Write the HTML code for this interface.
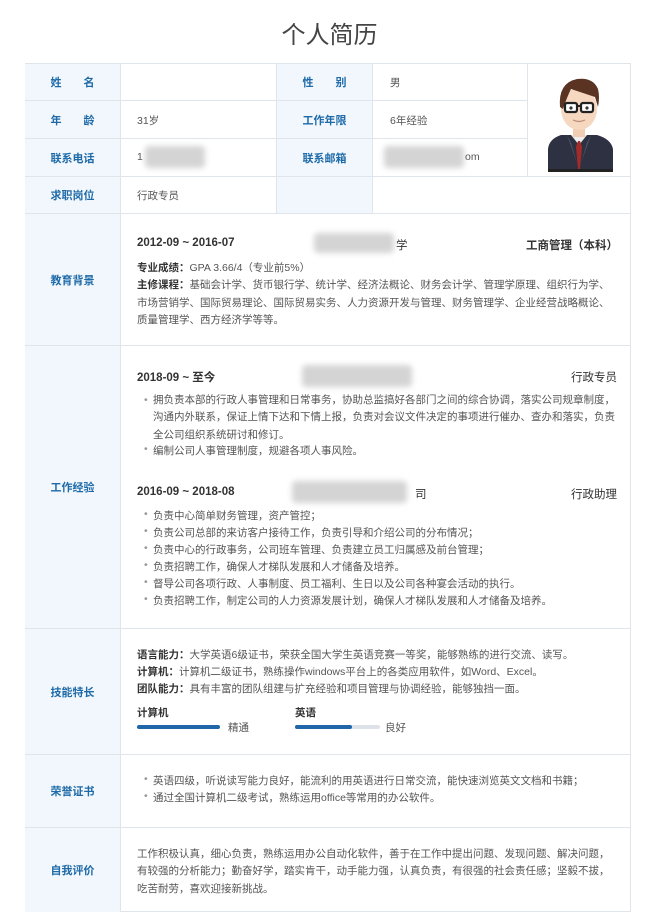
<!DOCTYPE html>
<html><head><meta charset="utf-8"><style>
*{margin:0;padding:0;box-sizing:border-box}
body{width:659px;height:913px;background:#fff;font-family:"Liberation Sans","Noto Sans CJK SC",sans-serif;color:#444;position:relative;overflow:hidden}
.a{position:absolute;white-space:nowrap}
.t{font-size:10.5px;color:#555}
.lab{position:absolute;left:25px;width:95px;background:#f1f7fc;color:#1e6aa8;font-size:11px;font-weight:bold;display:flex;align-items:center;justify-content:center}
.lab2{position:absolute;background:#f1f7fc;color:#1e6aa8;font-size:11px;font-weight:bold;display:flex;align-items:center;justify-content:center}
.h{position:absolute;left:25px;width:606px;height:1px;background:#dfe5ea}
.v{position:absolute;width:1px;background:#dfe5ea}
.b{font-weight:bold;color:#333;font-size:11.5px}
.blur{position:absolute;background:#d4d4d4;filter:blur(3px);border-radius:4px}
.li{font-size:10.5px;color:#555}
.li:before{content:"•";color:#999;position:absolute;left:-9px}
</style></head><body>
<div class="a" style="left:0;width:659px;text-align:center;top:15px;font-size:24px;color:#444">个人简历</div>

<div style="position:absolute;left:25px;top:63px;width:606px;height:849px;border:1px solid #dfe5ea"></div>
<div class="lab" style="top:64px;height:36px">姓　　名</div>
<div class="lab" style="top:101px;height:37px">年　　龄</div>
<div class="lab" style="top:139px;height:37px">联系电话</div>
<div class="lab" style="top:177px;height:36px">求职岗位</div>
<div class="lab2" style="left:277px;width:95px;top:64px;height:36px">性　　别</div>
<div class="lab2" style="left:277px;width:95px;top:101px;height:37px">工作年限</div>
<div class="lab2" style="left:277px;width:95px;top:139px;height:37px">联系邮箱</div>
<div class="lab2" style="left:277px;width:95px;top:177px;height:36px"></div>
<div class="lab" style="top:214px;height:131px">教育背景</div>
<div class="lab" style="top:346px;height:282px">工作经验</div>
<div class="lab" style="top:629px;height:125px">技能特长</div>
<div class="lab" style="top:755px;height:72px">荣誉证书</div>
<div class="lab" style="top:828px;height:84px">自我评价</div>

<div class="h" style="top:100px;width:502px"></div>
<div class="h" style="top:138px;width:502px"></div>
<div class="h" style="top:176px"></div>
<div class="h" style="top:213px"></div>
<div class="h" style="top:345px"></div>
<div class="h" style="top:628px"></div>
<div class="h" style="top:754px"></div>
<div class="h" style="top:827px"></div>
<div class="v" style="left:120px;top:63px;height:849px"></div>
<div class="v" style="left:276px;top:63px;height:150px"></div>
<div class="v" style="left:372px;top:63px;height:150px"></div>
<div class="v" style="left:527px;top:63px;height:113px"></div>

<div class="a t" style="left:390px;top:75px">男</div>
<div class="a t" style="left:137px;top:113px">31岁</div>
<div class="a t" style="left:390px;top:113px">6年经验</div>
<div class="a t" style="left:137px;top:151px">1</div>
<div class="blur" style="left:145px;top:146px;width:60px;height:22px"></div>
<div class="blur" style="left:384px;top:146px;width:80px;height:22px"></div>
<div class="a t" style="left:465px;top:151px">om</div>
<div class="a t" style="left:137px;top:188px">行政专员</div>

<svg style="position:absolute;left:527px;top:63px" width="104" height="113" viewBox="0 0 104 113">
<path d="M21 108 L21 86 Q22 76 34 72 L70 72 Q84 76 86 86 L86 108Z" fill="#2d3142"/>
<path d="M44 72 L52 82 L60 72Z" fill="#eee"/>
<path d="M40 72 L50 100 L44 80Z M64 72 L54 100 L60 80Z" fill="#555a6a"/>
<path d="M51 78 L53 78 L55 84 L53 106 L51 106 L49 84Z" fill="#a52a2a"/>
<rect x="46" y="60" width="12" height="14" fill="#f1cdb4"/>
<ellipse cx="52" cy="46" rx="18" ry="21" fill="#f6d7c0"/>
<path d="M33 44 Q31 20 50 16 Q66 14 71 26 Q73 34 71 44 L68 34 Q56 30 44 26 Q40 34 36 46Z" fill="#5a3322"/>
<rect x="38" y="40" width="12" height="9" rx="2" fill="#fff" stroke="#222" stroke-width="2.2"/>
<rect x="54" y="40" width="12" height="9" rx="2" fill="#fff" stroke="#222" stroke-width="2.2"/>
<line x1="50" y1="43" x2="54" y2="43" stroke="#222" stroke-width="2"/>
<circle cx="44" cy="45" r="1.6" fill="#333"/><circle cx="60" cy="45" r="1.6" fill="#333"/>
<path d="M46 57 Q52 60 58 57" stroke="#b87" stroke-width="1.2" fill="none"/>
<rect x="21" y="106" width="65" height="3" fill="#222"/>
</svg>

<div class="a b" style="left:137px;top:237px">2012-09 ~ 2016-07</div>
<div class="blur" style="left:314px;top:233px;width:80px;height:20px"></div>
<div class="a b" style="left:396px;top:237px;font-weight:normal">学</div>
<div class="a b" style="left:526px;top:237px">工商管理（本科）</div>
<div class="a t" style="left:137px;top:260px"><b style="color:#333">专业成绩：</b>GPA 3.66/4（专业前5%）</div>
<div class="a t" style="left:137px;top:277px;line-height:17.5px;white-space:normal;width:480px"><b style="color:#333">主修课程：</b>基础会计学、货币银行学、统计学、经济法概论、财务会计学、管理学原理、组织行为学、市场营销学、国际贸易理论、国际贸易实务、人力资源开发与管理、财务管理学、企业经营战略概论、质量管理学、西方经济学等等。</div>

<div class="a b" style="left:137px;top:369px">2018-09 ~ 至今</div>
<div class="blur" style="left:302px;top:365px;width:110px;height:22px"></div>
<div class="a b" style="left:571px;top:369px;font-weight:normal">行政专员</div>
<div style="position:absolute;left:153px;top:392px;width:464px;line-height:17.3px" class="li">拥负责本部的行政人事管理和日常事务，协助总监搞好各部门之间的综合协调，落实公司规章制度，沟通内外联系，保证上情下达和下情上报，负责对会议文件决定的事项进行催办、查办和落实，负责全公司组织系统研讨和修订。</div>
<div class="a li" style="left:153px;top:443px">编制公司人事管理制度，规避各项人事风险。</div>

<div class="a b" style="left:137px;top:486px">2016-09 ~ 2018-08</div>
<div class="blur" style="left:292px;top:481px;width:115px;height:22px"></div>
<div class="a b" style="left:415px;top:486px;font-weight:normal">司</div>
<div class="a b" style="left:571px;top:486px;font-weight:normal">行政助理</div>
<div class="a li" style="left:153px;top:508px">负责中心简单财务管理，资产管控；</div>
<div class="a li" style="left:153px;top:525px">负责公司总部的来访客户接待工作，负责引导和介绍公司的分布情况；</div>
<div class="a li" style="left:153px;top:542px">负责中心的行政事务，公司班车管理、负责建立员工归属感及前台管理；</div>
<div class="a li" style="left:153px;top:559px">负责招聘工作，确保人才梯队发展和人才储备及培养。</div>
<div class="a li" style="left:153px;top:576px">督导公司各项行政、人事制度、员工福利、生日以及公司各种宴会活动的执行。</div>
<div class="a li" style="left:153px;top:593px">负责招聘工作，制定公司的人力资源发展计划，确保人才梯队发展和人才储备及培养。</div>

<div class="a t" style="left:137px;top:647px"><b style="color:#333">语言能力：</b>大学英语6级证书，荣获全国大学生英语竞赛一等奖，能够熟练的进行交流、读写。</div>
<div class="a t" style="left:137px;top:664px"><b style="color:#333">计算机：</b>计算机二级证书，熟练操作windows平台上的各类应用软件，如Word、Excel。</div>
<div class="a t" style="left:137px;top:681px"><b style="color:#333">团队能力：</b>具有丰富的团队组建与扩充经验和项目管理与协调经验，能够独挡一面。</div>
<div class="a t" style="left:137px;top:705px;color:#333;font-weight:bold">计算机</div>
<div class="a t" style="left:295px;top:705px;color:#333;font-weight:bold">英语</div>
<div style="position:absolute;left:137px;top:725px;width:83px;height:4px;border-radius:2px;background:#1f67a8"></div>
<div class="a t" style="left:228px;top:720px">精通</div>
<div style="position:absolute;left:295px;top:725px;width:85px;height:4px;border-radius:2px;background:#dde2e8"></div>
<div style="position:absolute;left:295px;top:725px;width:57px;height:4px;border-radius:2px;background:#1f67a8"></div>
<div class="a t" style="left:385px;top:720px">良好</div>

<div class="a li" style="left:153px;top:773px">英语四级，听说读写能力良好，能流利的用英语进行日常交流，能快速浏览英文文档和书籍；</div>
<div class="a li" style="left:153px;top:790px">通过全国计算机二级考试，熟练运用office等常用的办公软件。</div>

<div class="t" style="position:absolute;left:137px;top:846px;width:482px;line-height:17.3px">工作积极认真，细心负责，熟练运用办公自动化软件，善于在工作中提出问题、发现问题、解决问题，有较强的分析能力；勤奋好学，踏实肯干，动手能力强，认真负责，有很强的社会责任感；坚毅不拔，吃苦耐劳，喜欢迎接新挑战。</div>
</body></html>
